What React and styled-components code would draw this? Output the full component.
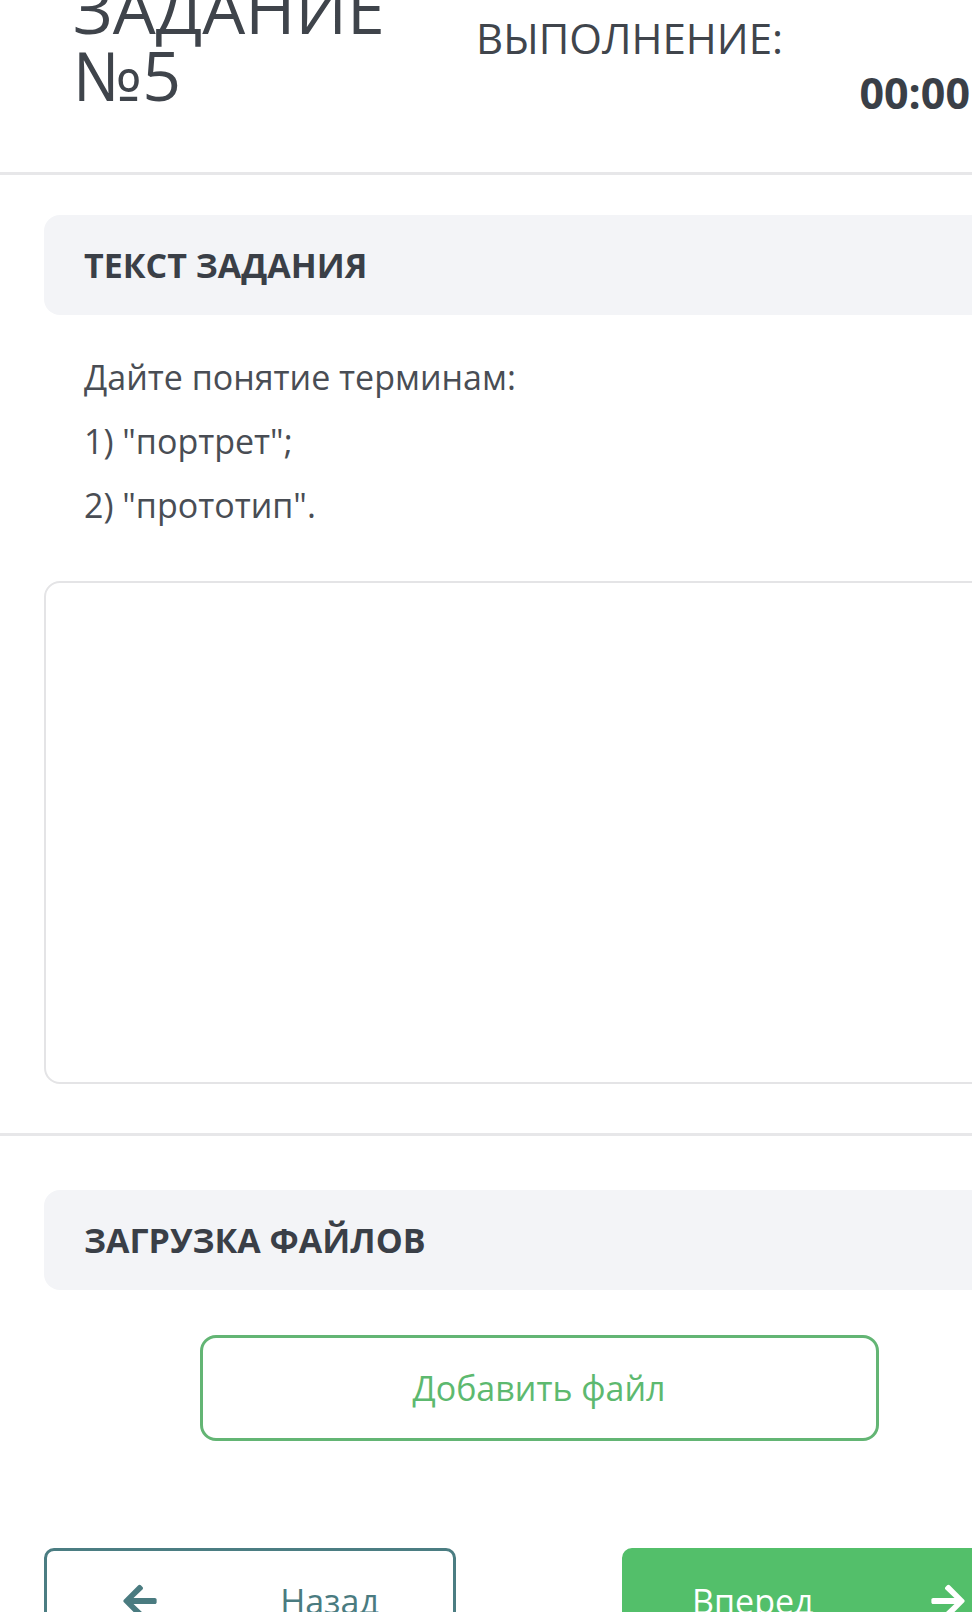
import React from 'react';
import styled, { createGlobalStyle } from 'styled-components';
import { FaArrowLeft, FaArrowRight } from 'react-icons/fa';

const GlobalStyle = createGlobalStyle`
  html, body {
    margin: 0;
    padding: 0;
    background: #fff;
    overflow-x: hidden;
  }
  body {
    font-family: "Open Sans", "Noto Sans", sans-serif;
    color: #3d4249;
  }
  #root {
    width: 972px;
    overflow: hidden;
  }
`;

const StyledPage = styled.div`
  width: 1078px;
  position: relative;
`;

const TopBadge = styled.div`
  position: absolute;
  top: 0;
  left: 0;
  width: 97px;
  height: 21px;
  background: #52b9b2;
  border-bottom-right-radius: 10px;
  z-index: 2;
`;

const Header = styled.header`
  display: flex;
  height: 198px;
  margin-top: -26px;
  padding-left: 73px;
  box-sizing: border-box;
`;

const Title = styled.h1`
  margin: 0;
  width: 403px;
  font-size: 68px;
  line-height: 67px;
  font-weight: 400;
  color: #3f444b;
`;

const TimeBlock = styled.div`
  width: 494px;
  margin-top: -20px;
  display: flex;
  flex-direction: column;
  gap: 10px;
`;

const TimeLabel = styled.div`
  font-size: 42px;
  line-height: 49px;
  color: #40454c;
`;

const Timer = styled.div`
  margin-top: -4px;
  font-size: 43px;
  line-height: 49px;
  font-weight: 700;
  text-align: right;
  color: #3a3f47;
`;

const Divider = styled.hr`
  margin: 0;
  border: 0;
  height: 3px;
  background: #e7e7e9;
`;

const Section = styled.section`
  padding: ${props => props.padding} 44px 0;
  display: flex;
  flex-direction: column;
`;

const CardHead = styled.div`
  height: 100px;
  display: flex;
  align-items: center;
  padding-left: 40px;
  background: #f3f4f7;
  border-radius: 16px;
  font-size: 34px;
  font-weight: 700;
  color: #3a3f47;
`;

const TaskText = styled.div`
  margin-top: 30px;
  padding-left: 40px;
`;

const TaskLine = styled.p`
  margin: 0;
  font-size: 34px;
  line-height: 64px;
  color: #494d54;
`;

const Answer = styled.textarea`
  display: block;
  margin-top: 44px;
  height: 503px;
  box-sizing: border-box;
  border: 2px solid #e4e4e6;
  border-radius: 16px;
  padding: 20px;
  resize: none;
  outline: none;
  font-family: inherit;
  font-size: 30px;
  color: #3d4249;
  margin-bottom: 49px;
`;

const AddFile = styled.button`
  width: 679px;
  height: 106px;
  margin: 45px auto 0;
  background: #fff;
  border: 3px solid #63b574;
  border-radius: 16px;
  font-family: inherit;
  font-size: 34px;
  color: #5db96f;
`;

const NavRow = styled.div`
  display: flex;
  justify-content: space-between;
  margin-top: 107px;
`;

const NavButton = styled.button`
  width: 412px;
  height: 106px;
  box-sizing: border-box;
  display: flex;
  align-items: center;
  justify-content: space-between;
  padding: ${props => (props.primary ? '0 64px 0 67px' : '0 74px 0 74px')};
  background: ${props => (props.primary ? '#53bf6a' : '#fff')};
  border: 3px solid ${props => (props.primary ? '#53bf6a' : '#4b7d82')};
  border-radius: 10px;
  font-family: inherit;
  font-size: 34px;
  color: ${props => (props.primary ? '#fff' : '#4a7b80')};

  svg {
    width: 38px;
    height: 38px;
  }
`;

function App() {
  return (
    <StyledPage>
      <GlobalStyle />
      <TopBadge />
      <Header>
        <Title>ЗАДАНИЕ №5</Title>
        <TimeBlock>
          <TimeLabel>ВРЕМЯ НА</TimeLabel>
          <TimeLabel>ВЫПОЛНЕНИЕ:</TimeLabel>
          <Timer>00:00</Timer>
        </TimeBlock>
      </Header>
      <Divider />
      <Section padding="40px">
        <CardHead>ТЕКСТ ЗАДАНИЯ</CardHead>
        <TaskText>
          <TaskLine>Дайте понятие терминам:</TaskLine>
          <TaskLine>1) "портрет";</TaskLine>
          <TaskLine>2) "прототип".</TaskLine>
        </TaskText>
        <Answer />
      </Section>
      <Divider />
      <Section padding="54px">
        <CardHead>ЗАГРУЗКА ФАЙЛОВ</CardHead>
        <AddFile>Добавить файл</AddFile>
        <NavRow>
          <NavButton>
            <FaArrowLeft />
            Назад
          </NavButton>
          <NavButton primary>
            Вперед
            <FaArrowRight />
          </NavButton>
        </NavRow>
      </Section>
    </StyledPage>
  );
}

export default App;
